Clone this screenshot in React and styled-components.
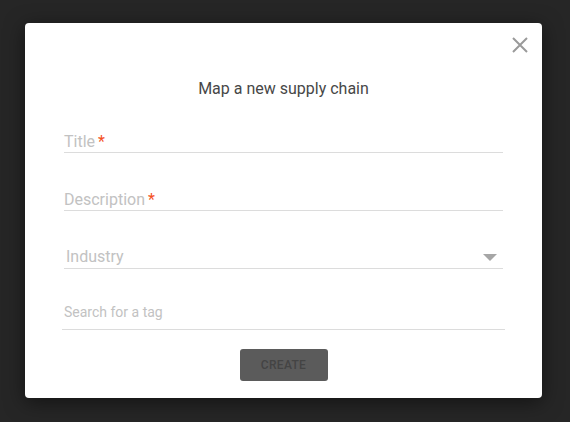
import React from "react";
import styled, { createGlobalStyle } from "styled-components";

const GlobalStyle = createGlobalStyle`
  html, body {
    margin: 0;
    padding: 0;
    background: #262626;
  }
  body {
    font-family: Roboto, "Noto Sans", sans-serif;
  }
`;

const Backdrop = styled.div`
  width: 570px;
  height: 422px;
  background: #262626;
  padding: 23px 0 0 25px;
  box-sizing: border-box;
  overflow: hidden;
`;

const Modal = styled.div`
  position: relative;
  width: 517px;
  height: 375px;
  background: #fff;
  border-radius: 4px;
  box-shadow: 0 4px 20px rgba(0, 0, 0, 0.5);
  padding: 56px 39px 0 39px;
  box-sizing: border-box;
  display: flex;
  flex-direction: column;
`;

const CloseButton = styled.button`
  position: absolute;
  top: 12px;
  right: 12px;
  width: 20px;
  height: 20px;
  padding: 0;
  border: none;
  background: none;
  cursor: pointer;
  display: flex;
  align-items: center;
  justify-content: center;
`;

const Heading = styled.h2`
  margin: 0;
  font-size: 16px;
  line-height: 20px;
  font-weight: 400;
  color: #474747;
  text-align: center;
`;

const Form = styled.div`
  display: flex;
  flex-direction: column;
  margin-top: 33px;
`;

const Field = styled.div`
  display: flex;
  align-items: center;
  justify-content: space-between;
  border-bottom: 1px solid #dcdcdc;
  padding: 0 0 ${(p) => p.$pb}px ${(p) => p.$pl || 0}px;
  margin: ${(p) => p.$mt || 0}px ${(p) => p.$mx || 0}px 0;
`;

const Label = styled.span`
  font-size: ${(p) => p.$size || 16}px;
  line-height: ${(p) => p.$lh || 20}px;
  color: #c2c2c2;
`;

const Required = styled.span`
  color: #f4511e;
  margin-left: 3px;
`;

const Caret = styled.span`
  width: 0;
  height: 0;
  border-left: 7px solid transparent;
  border-right: 7px solid transparent;
  border-top: 7px solid #a6a6a6;
  margin-right: 6px;
`;

const Actions = styled.div`
  display: flex;
  justify-content: center;
  margin-top: 19px;
`;

const CreateButton = styled.button`
  width: 88px;
  height: 32px;
  border: none;
  border-radius: 3px;
  background: #5b5b5b;
  color: #444;
  font-family: Roboto, sans-serif;
  font-size: 12px;
  font-weight: 500;
  letter-spacing: 0.3px;
`;

export default function App() {
  return (
    <>
      <GlobalStyle />
      <Backdrop>
        <Modal>
          <CloseButton aria-label="Close">
            <svg width="16" height="16" viewBox="0 0 16 16">
              <path d="M1 1 L15 15 M15 1 L1 15" stroke="#9a9a9a" strokeWidth="2" />
            </svg>
          </CloseButton>
          <Heading>Map a new supply chain</Heading>
          <Form>
            <Field $pb={0}>
              <Label>
                Title<Required>*</Required>
              </Label>
            </Field>
            <Field $pb={0} $mt={37}>
              <Label>
                Description<Required>*</Required>
              </Label>
            </Field>
            <Field $pb={1} $mt={36} $pl={2}>
              <Label>Industry</Label>
              <Caret />
            </Field>
            <Field $pb={8} $mt={35} $mx={-2} $pl={2}>
              <Label $size={14} $lh={17}>
                Search for a tag
              </Label>
            </Field>
          </Form>
          <Actions>
            <CreateButton disabled>CREATE</CreateButton>
          </Actions>
        </Modal>
      </Backdrop>
    </>
  );
}
